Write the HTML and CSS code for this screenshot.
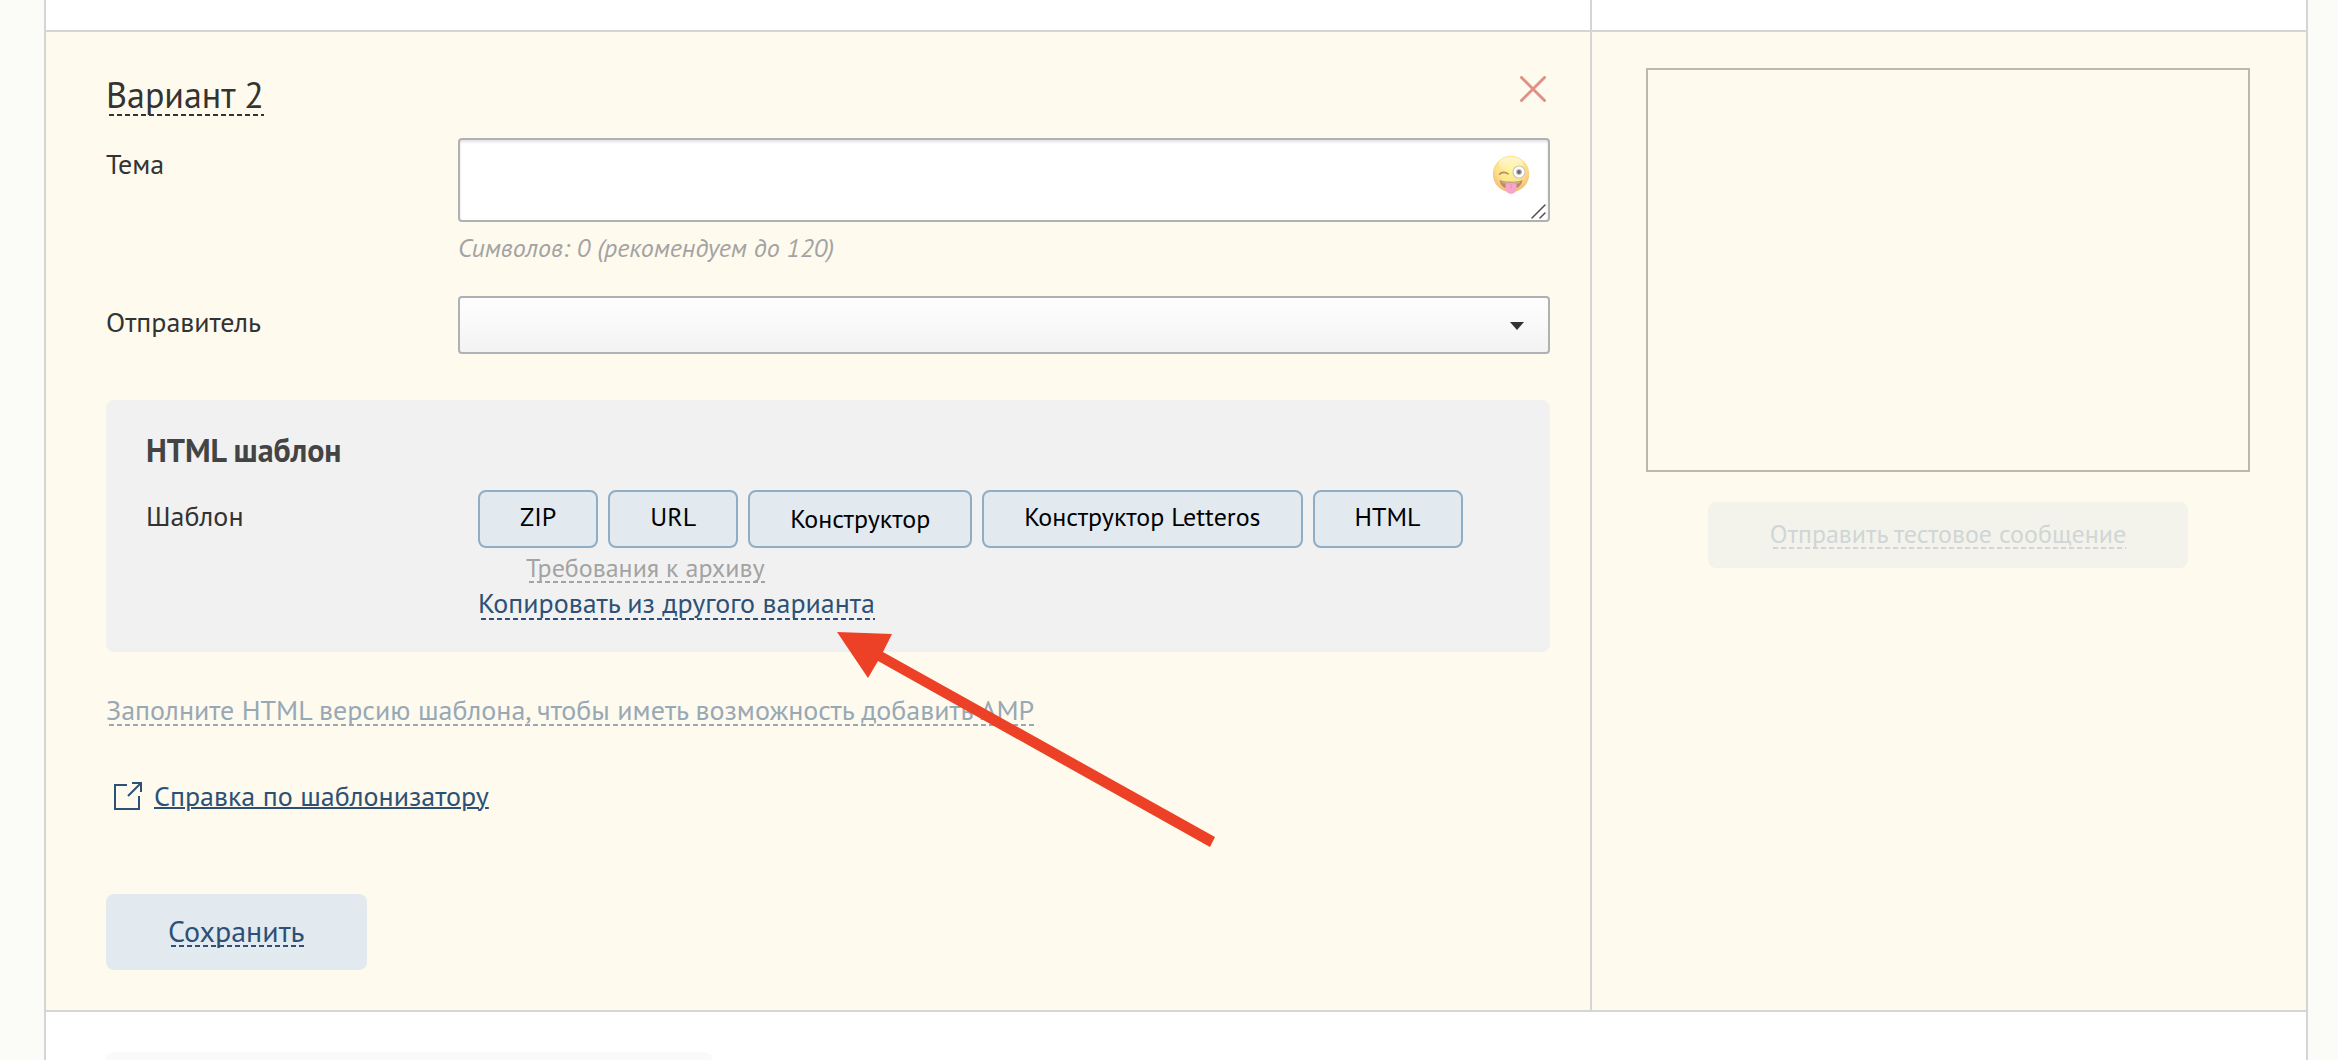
FILE: index.html
```html
<!DOCTYPE html>
<html lang="ru">
<head>
<meta charset="utf-8">
<title>Вариант 2</title>
<link rel="stylesheet" href="styles.css">
</head>
<body>
<main class="sheet">
  <div class="columns columns-previous">
    <div class="column-main"></div>
    <div class="column-side"></div>
  </div>

  <section class="columns variant">
    <form class="column-main variant-form">
      <header class="variant-header">
        <h2 class="variant-title dashed">Вариант 2</h2>
        <button class="close" type="button" aria-label="Удалить вариант">
          <svg width="26" height="26" viewBox="0 0 26 26" aria-hidden="true"><path d="M1.5 1.5l23 23M24.5 1.5l-23 23" fill="none" stroke="#e09186" stroke-width="3" stroke-linecap="round"/></svg>
        </button>
      </header>

      <div class="row">
        <label class="label" for="subject">Тема</label>
        <div class="field">
          <div class="subject-box">
            <textarea class="subject" id="subject"></textarea>
            <button class="emoji" type="button" aria-label="Вставить эмодзи">
              <svg width="38" height="40" viewBox="0 0 38 40" aria-hidden="true">
                <defs>
                  <radialGradient id="face" cx="50%" cy="34%" r="66%">
                    <stop offset="0" stop-color="#fff59a"/>
                    <stop offset="0.55" stop-color="#fde68f"/>
                    <stop offset="1" stop-color="#f3b873"/>
                  </radialGradient>
                  <linearGradient id="shine" x1="0" y1="0" x2="0" y2="1">
                    <stop offset="0" stop-color="#fff" stop-opacity="0.65"/>
                    <stop offset="1" stop-color="#fff" stop-opacity="0"/>
                  </linearGradient>
                </defs>
                <circle cx="19" cy="19" r="18.2" fill="url(#face)"/>
                <ellipse cx="19" cy="9" rx="12" ry="7" fill="url(#shine)"/>
                <path d="M7.5 19.2c2-2.4 6-2.4 8.6-.4" fill="none" stroke="#b98a63" stroke-width="1.6" stroke-linecap="round"/>
                <circle cx="27" cy="17" r="6" fill="#fff" stroke="#cfc8bd" stroke-width="1.2"/>
                <circle cx="27" cy="17" r="3" fill="#bdbdbd"/>
                <circle cx="27" cy="17" r="1.9" fill="#6e6a68"/>
                <path d="M7.5 25.2c7.500 2 15.500 2 23 0-1.500 6.500-6 9-11.500 9s-10-2.500-11.500-9z" fill="#b58d62"/>
                <path d="M9.500 26.300c6.500 1.500 12.500 1.500 19 0l-1 2c-6 1-11 1-17 0z" fill="#fff8ea" opacity="0.3"/>
                <path d="M13.500 28.500c3.500-.8 7.500-.8 11 0v5c0 7-11 7-11 0z" fill="#f8a5cd"/>
                <path d="M19 29v5" stroke="#ee8dbb" stroke-width="1"/>
              </svg>
            </button>
            <svg class="grip" width="15" height="15" viewBox="0 0 15 15" aria-hidden="true"><path d="M1 14L14 1M9 14l5-5" fill="none" stroke="#4f4f4f" stroke-width="1.500" stroke-linecap="round"/></svg>
          </div>
          <p class="hint">Символов: 0 (рекомендуем до 120)</p>
        </div>
      </div>

      <div class="row">
        <label class="label" for="sender">Отправитель</label>
        <div class="sender-box">
          <select class="sender" id="sender"><option value=""></option></select>
          <svg class="caret" width="14" height="8" viewBox="0 0 14 8" aria-hidden="true"><path d="M0 0h14L7 8z" fill="#333"/></svg>
        </div>
      </div>

      <section class="panel">
        <h3 class="panel-title">HTML шаблон</h3>
        <div class="row row-template">
          <span class="label">Шаблон</span>
          <div class="template">
            <div class="sources">
              <button class="source" type="button">ZIP</button>
              <button class="source" type="button">URL</button>
              <button class="source source-link" type="button">Конструктор</button>
              <button class="source" type="button">Конструктор Letteros</button>
              <button class="source" type="button">HTML</button>
            </div>
            <a class="requirements dashed" href="#">Требования к архиву</a>
            <a class="copy dashed" href="#">Копировать из другого варианта</a>
          </div>
        </div>
      </section>

      <a class="amp dashed" href="#">Заполните HTML версию шаблона, чтобы иметь возможность добавить AMP</a>

      <a class="help" href="#">
        <svg width="28" height="28" viewBox="0 0 28 28" aria-hidden="true"><path d="M13 3H1v24h24V14M18 1h9v9M27 1L14 14" fill="none" stroke="#2d5176" stroke-width="2"/></svg>
        <span class="help-text">Справка по шаблонизатору</span>
      </a>

      <button class="save" type="button"><span class="dashed">Сохранить</span></button>
    </form>

    <aside class="column-side preview">
      <div class="preview-frame"></div>
      <button class="test" type="button" disabled><span class="dashed">Отправить тестовое сообщение</span></button>
    </aside>

    <svg class="pointer" width="380" height="218" viewBox="0 0 380 218" aria-hidden="true"><path d="M0 0l55 2-9 18 332 185-5 10L41 29 31 46z" fill="#ec4126"/></svg>
  </section>

  <footer class="sheet-footer"><div class="next-block"></div></footer>
</main>
</body>
</html>
```
FILE: styles.css
```css
* { box-sizing: border-box; }

body {
  margin: 0;
  padding: 0 30px 0 44px;
  background: #fbfcf8;
  color: #333;
  font: 28px/30px "PT Sans", "Noto Sans", sans-serif;
}

h2, h3, p { margin: 0; }

button, select, textarea { font: inherit; }

button {
  border: 0;
  background: none;
  padding: 0;
  cursor: pointer;
}

.sheet {
  min-height: 100vh;
  border: solid #d5d5d5;
  border-width: 0 2px;
  background: #fff;
}

.columns {
  display: grid;
  grid-template-columns: 1fr 714px;
  border-bottom: 2px solid #d5d5d5;
}

.columns-previous { min-height: 32px; }

.column-main { border-right: 2px solid #d5d5d5; }

.variant {
  position: relative;
  background: #fefaed;
}

.variant-form {
  display: flex;
  flex-direction: column;
  align-items: flex-start;
  padding: 44px 40px 40px 60px;
}

/* Dashed underline: 5px dash, 3px gap */
.dashed {
  padding-bottom: 2px;
  background: repeating-linear-gradient(90deg, transparent 0 3px, currentColor 3px 8px) left bottom / 100% 2px no-repeat;
}

.variant-header {
  display: flex;
  justify-content: space-between;
  align-items: flex-start;
  width: 100%;
  padding-right: 4px;
  margin-bottom: 22px;
}

.variant-title {
  font-size: 36px;
  line-height: 38px;
  font-weight: 400;
}

.close { display: flex; }

.row {
  display: grid;
  grid-template-columns: 352px 1fr;
  align-items: start;
  width: 100%;
  margin-bottom: 32px;
}

.label { padding-top: 11px; }

.subject-box, .sender-box {
  position: relative;
  display: flex;
}

.subject {
  width: 100%;
  height: 84px;
  padding: 10px 70px 10px 16px;
  border: 2px solid #b0b1b6;
  border-radius: 4px;
  background: #fff;
  box-shadow: inset 0 2px 3px #e2e2e6;
  resize: none;
}

.emoji {
  position: absolute;
  top: 17px;
  right: 20px;
  display: flex;
}

.grip {
  position: absolute;
  right: 4px;
  bottom: 3px;
}

.hint {
  margin-top: 10px;
  color: #a3a3a3;
  font-size: 26px;
  line-height: 32px;
  font-style: italic;
}

.sender {
  width: 100%;
  height: 58px;
  padding: 0 60px 0 16px;
  border: 2px solid #b0b1b6;
  border-radius: 4px;
  background: linear-gradient(#fefefe, #f3f3f4);
  color: #333;
  appearance: none;
}

.caret {
  position: absolute;
  top: 26px;
  right: 26px;
  pointer-events: none;
}

.panel {
  width: 100%;
  margin: 14px 0 44px;
  padding: 30px 40px 32px;
  border-radius: 8px;
  background: #f1f1f1;
}

.panel-title {
  margin-bottom: 20px;
  color: #444;
  font-size: 32px;
  line-height: 40px;
}

.row-template {
  grid-template-columns: 332px 1fr;
  margin-bottom: 0;
}

.template {
  display: flex;
  flex-direction: column;
  align-items: flex-start;
}

.sources {
  display: flex;
  flex-wrap: wrap;
  gap: 10px;
  margin-bottom: 7px;
}

.source {
  height: 58px;
  padding: 0 40px 4px;
  border: 2px solid #8fadc4;
  border-radius: 8px;
  background: #e2e9ef;
  color: #000;
  font-size: 26px;
}

.source-link { padding-bottom: 0; }

a {
  color: #2d5176;
  text-decoration: none;
}

.requirements {
  margin: 0 0 5px 48px;
  color: #a3a3a3;
  font-size: 26px;
  line-height: 26px;
}

.copy { line-height: 30px; }

.amp {
  margin-bottom: 55px;
  color: #98a8b5;
  line-height: 28px;
}

.help {
  display: flex;
  align-items: center;
  gap: 12px;
  margin: 0 0 83px 8px;
}

.help-text {
  text-decoration: underline;
  text-decoration-thickness: 2px;
}

.save {
  height: 76px;
  padding: 0 62px;
  border-radius: 8px;
  background: #e2e9ef;
  color: #2d5176;
  font-size: 30px;
}

.save .dashed, .test .dashed {
  display: block;
  line-height: 28px;
}

.test .dashed { line-height: 26px; }

.preview {
  display: flex;
  flex-direction: column;
  align-items: center;
  padding: 36px 56px 36px 54px;
}

.preview-frame {
  width: 100%;
  height: 404px;
  margin-bottom: 30px;
  border: 2px solid #bbb9ae;
}

.test {
  height: 66px;
  padding: 0 62px;
  border-radius: 8px;
  background: #f3f3ec;
  color: #d0d6d6;
  font-size: 26px;
  cursor: default;
}

.pointer {
  position: absolute;
  top: 600px;
  left: 791px;
  pointer-events: none;
}

.sheet-footer { padding: 40px 60px 0; }

.next-block {
  max-width: 606px;
  height: 8px;
  border-radius: 8px 8px 0 0;
  background: #fafafa;
}
```
